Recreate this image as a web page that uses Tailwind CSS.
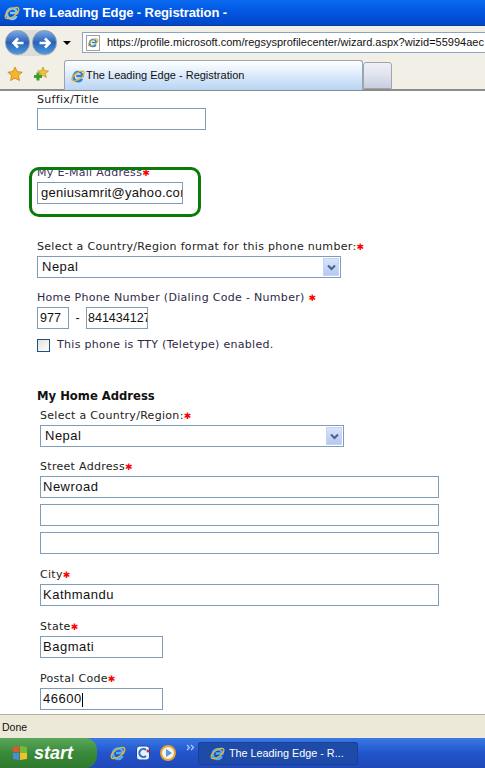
<!DOCTYPE html>
<html>
  <head>
    <meta charset="utf-8">
    <meta name="viewport" content="width=device-width">
    <title>The Leading Edge - Registration</title>
    <script src="https://cdn.jsdelivr.net/npm/@tailwindcss/browser@4"></script>
  </head>
  <body>
    <div class="flex flex-col w-[485px] h-[768px] overflow-hidden bg-white font-['DejaVu_Sans',sans-serif]">

      <!-- title bar -->
      <div class="flex items-center h-[26px] shrink-0 pl-[3px] gap-[2px] bg-gradient-to-b from-[#0a6af0] via-[#0255e0] to-[#0146c8] border-b border-[#0a3a9a]">
        <svg class="w-[18px] h-[18px]" viewBox="0 0 18 18">
          <path d="M4 10a5 5 0 0 1 10-1H7m-3 1a5 5 0 0 0 9.500 2" fill="none" stroke="#7ac8f4" stroke-width="2.600"/>
          <ellipse cx="9" cy="9" rx="8" ry="3.600" transform="rotate(-35 9 9)" fill="none" stroke="#f0b430" stroke-width="1.400"/>
        </svg>
        <span class="text-white font-bold text-[13px] font-['Liberation_Sans',sans-serif] tracking-[-0.1px]">The Leading Edge - Registration -</span>
      </div>

      <!-- address row -->
      <div class="flex items-center h-[33px] shrink-0 pl-[5px] bg-[#f2f0e6]">
        <div class="flex items-center rounded-full bg-[#dcdcd8] h-[26px]">
          <div class="flex items-center justify-center w-[25px] h-[25px] rounded-full bg-gradient-to-b from-[#7aa8e4] via-[#2a62b8] to-[#4a9ae0] border border-[#8a98b0]">
            <svg class="w-[16px] h-[16px]" viewBox="0 0 16 16"><path d="M13.500 8H3.500M8 3.500 3.500 8 8 12.500" fill="none" stroke="#fff" stroke-width="2.600"/></svg>
          </div>
          <div class="flex items-center justify-center ml-[2px] w-[25px] h-[25px] rounded-full bg-gradient-to-b from-[#7aa8e4] via-[#2a62b8] to-[#4a9ae0] border border-[#8a98b0]">
            <svg class="w-[16px] h-[16px]" viewBox="0 0 16 16"><path d="M2.500 8H12.500M8 3.500 12.500 8 8 12.500" fill="none" stroke="#fff" stroke-width="2.600"/></svg>
          </div>
        </div>
        <div class="ml-[6px] w-0 h-0 border-x-[4px] border-x-transparent border-t-[4px] border-t-black"></div>
        <div class="flex items-center ml-[11px] flex-1 h-[21px] bg-white border-y border-l border-[#8aa4c4] pl-[3px] overflow-hidden whitespace-nowrap">
          <div class="relative flex items-center justify-center w-[14px] h-[16px] bg-white border border-[#a0a0a0] shrink-0">
            <svg class="w-[13px] h-[13px]" viewBox="0 0 18 18"><path d="M4 10a5 5 0 0 1 10-1H7m-3 1a5 5 0 0 0 9.500 2" fill="none" stroke="#2a84d8" stroke-width="2.600"/><ellipse cx="9" cy="9" rx="8" ry="3.600" transform="rotate(-35 9 9)" fill="none" stroke="#e8a820" stroke-width="1.400"/></svg>
          </div>
          <span class="ml-[7px] text-[11px] text-[#111] font-['Liberation_Sans',sans-serif]">https://profile.microsoft.com/regsysprofilecenter/wizard.aspx?wizid=55994aec</span>
        </div>
      </div>

      <!-- tab row -->
      <div class="flex items-end h-[32px] shrink-0 bg-[#f2f0e6] border-b-2 border-[#8c8c88]">
        <div class="flex items-center self-center w-[64px] pl-[7px] gap-[10px] h-[24px]">
          <svg class="w-[16px] h-[16px]" viewBox="0 0 16 16"><path d="M8 1l2.200 4.600 5 .6-3.700 3.400 1 5L8 12.200 3.500 14.600l1-5L.8 6.200l5-.6z" fill="#f7b52c" stroke="#c07a10" stroke-width=".7"/></svg>
          <svg class="w-[16px] h-[16px]" viewBox="0 0 16 16"><path d="M10 1l1.500 3.500 4 .5-3 2.500.8 4L10 9.500 6.800 11.500l.8-4-3-2.500 4-.5z" fill="#f2c040" stroke="#b8860b" stroke-width=".6"/><path d="M5 6.500v8M1 10.500h8" stroke="#3aa02a" stroke-width="3"/></svg>
        </div>
        <div class="flex items-center w-[299px] h-[30px] pl-[5px] rounded-t-[3px] border-x border-t border-[#98a4b4] bg-gradient-to-b from-white to-[#b8d4f4] -mb-[1px]">
          <svg class="w-[16px] h-[16px]" viewBox="0 0 18 18"><path d="M4 10a5 5 0 0 1 10-1H7m-3 1a5 5 0 0 0 9.500 2" fill="none" stroke="#2a84d8" stroke-width="2.600"/><ellipse cx="9" cy="9" rx="8" ry="3.600" transform="rotate(-35 9 9)" fill="none" stroke="#e8a820" stroke-width="1.400"/></svg>
          <span class="text-[11px] text-[#111] whitespace-nowrap font-['Liberation_Sans',sans-serif]">The Leading Edge - Registration</span>
        </div>
        <div class="w-[29px] h-[27px] rounded-t-[3px] border border-[#a0a4ac] bg-gradient-to-b from-[#f0f0f6] via-[#dfe2ee] to-[#c8cde0]"></div>
      </div>

      <!-- page content -->
      <div class="relative flex-1 min-h-0 overflow-hidden bg-white pl-[37px] text-[11px] text-[#222] border-b border-[#b0b0a8]">
        <div class="flex flex-col pt-[2px]">
          <label class="h-[13px] leading-[13px] tracking-[0.3px]">Suffix/Title</label>
          <div class="mt-[2px] w-[169px] h-[22px] border border-[#7f9db9]"></div>

          <label class="mt-[36px] h-[13px] leading-[13px] tracking-[0.3px] text-[#403060]">My E-Mail Address<span class="text-[#f00] text-[9px]">✱</span></label>
          <div class="mt-[3px] w-[146px] h-[22px] border border-[#7f9db9] pl-[3px] text-[13px] leading-[20px] overflow-hidden whitespace-nowrap text-[#111] font-['Liberation_Sans',sans-serif] tracking-[0.3px]">geniusamrit@yahoo.com</div>

          <label class="mt-[36px] h-[13px] leading-[13px] tracking-[0.31px]">Select a Country/Region format for this phone number:<span class="text-[#f00] text-[9px]">✱</span></label>
          <div class="flex items-center justify-between mt-[3px] w-[304px] h-[22px] border border-[#7f9db9] pl-[4px] pr-[1px] text-[13px] font-['Liberation_Sans',sans-serif] tracking-[0.5px] text-[#111]">
            <span>Nepal</span>
            <span class="flex items-center justify-center w-[16px] h-[18px] bg-gradient-to-b from-[#d8e4fa] to-[#b4c8f4] border border-[#c4d4f0]"><svg class="w-[9px] h-[7px]" viewBox="0 0 9 7"><path d="M1 1.500 4.500 5 8 1.500" fill="none" stroke="#4d6185" stroke-width="2"/></svg></span>
          </div>

          <label class="mt-[13px] h-[13px] leading-[13px] tracking-[0.31px] text-[#302848]">Home Phone Number (Dialing Code - Number) <span class="text-[#f00] text-[9px]">✱</span></label>
          <div class="flex items-center mt-[3px] h-[22px] font-['Liberation_Sans',sans-serif] text-[12.500px] text-[#111]">
            <div class="w-[32px] h-[22px] border border-[#7f9db9] pl-[2px] leading-[20px]">977</div>
            <span class="w-[17px] text-center">-</span>
            <div class="w-[62px] h-[22px] border border-[#7f9db9] pl-[1px] leading-[20px] overflow-hidden whitespace-nowrap">841434127</div>
          </div>
          <div class="flex items-center mt-[10px] h-[13px]">
            <div class="w-[13px] h-[13px] border border-[#1c5180] bg-gradient-to-br from-[#e4e4dc] to-white"></div>
            <span class="ml-[7px] tracking-[0.3px] text-[#302848]">This phone is TTY (Teletype) enabled.</span>
          </div>

          <h2 class="mt-[37px] h-[14px] leading-[14px] text-[11.600px] font-bold text-[#111]">My Home Address</h2>

          <div class="flex flex-col ml-[3px]">
            <label class="mt-[6px] h-[13px] leading-[13px] tracking-[0.3px]">Select a Country/Region:<span class="text-[#f00] text-[9px]">✱</span></label>
            <div class="flex items-center justify-between mt-[3px] w-[304px] h-[22px] border border-[#7f9db9] pl-[4px] pr-[1px] text-[13px] font-['Liberation_Sans',sans-serif] tracking-[0.5px] text-[#111]">
              <span>Nepal</span>
              <span class="flex items-center justify-center w-[16px] h-[18px] bg-gradient-to-b from-[#d8e4fa] to-[#b4c8f4] border border-[#c4d4f0]"><svg class="w-[9px] h-[7px]" viewBox="0 0 9 7"><path d="M1 1.500 4.500 5 8 1.500" fill="none" stroke="#4d6185" stroke-width="2"/></svg></span>
            </div>

            <label class="mt-[13px] h-[13px] leading-[13px] tracking-[0.3px]">Street Address<span class="text-[#f00] text-[9px]">✱</span></label>
            <div class="mt-[3px] w-[399px] h-[22px] border border-[#7f9db9] pl-[2px] text-[13px] leading-[20px] font-['Liberation_Sans',sans-serif] tracking-[0.5px] text-[#111]">Newroad</div>
            <div class="mt-[6px] w-[399px] h-[22px] border border-[#7f9db9]"></div>
            <div class="mt-[6px] w-[399px] h-[22px] border border-[#7f9db9]"></div>

            <label class="mt-[14px] h-[13px] leading-[13px] tracking-[0.3px]">City<span class="text-[#f00] text-[9px]">✱</span></label>
            <div class="mt-[3px] w-[399px] h-[22px] border border-[#7f9db9] pl-[2px] text-[13px] leading-[20px] font-['Liberation_Sans',sans-serif] tracking-[0.5px] text-[#111]">Kathmandu</div>

            <label class="mt-[14px] h-[13px] leading-[13px] tracking-[0.3px]">State<span class="text-[#f00] text-[9px]">✱</span></label>
            <div class="mt-[3px] w-[123px] h-[22px] border border-[#7f9db9] pl-[2px] text-[13px] leading-[20px] font-['Liberation_Sans',sans-serif] tracking-[0.5px] text-[#111]">Bagmati</div>

            <label class="mt-[14px] h-[13px] leading-[13px] tracking-[0.3px]">Postal Code<span class="text-[#f00] text-[9px]">✱</span></label>
            <div class="mt-[3px] w-[123px] h-[22px] border border-[#7f9db9] pl-[2px] text-[13px] leading-[20px] font-['Liberation_Sans',sans-serif] tracking-[0.5px] text-[#111]">46600<span class="inline-block w-px h-[14px] bg-black align-middle"></span></div>
          </div>
        </div>
        <!-- green annotation drawn over the form -->
        <div class="absolute left-[29px] top-[76px] w-[172px] h-[50px] rounded-[10px] border-[3px] border-[#0a7a0a]"></div>
      </div>

      <!-- status bar -->
      <div class="flex items-center h-[23px] shrink-0 pl-[2px] pt-[3px] text-[10.500px] text-[#111] bg-[#ece9d8] font-['Liberation_Sans',sans-serif]">Done</div>

      <!-- taskbar -->
      <div class="flex items-center h-[30px] shrink-0 bg-gradient-to-b from-[#3a7ae4] via-[#2254cc] to-[#2048b8] font-['Liberation_Sans',sans-serif]">
        <div class="flex items-center w-[97px] h-full pl-[11px] rounded-r-[12px] bg-gradient-to-b from-[#5aa85a] via-[#3a8a3a] to-[#2f7a2f]">
          <svg class="w-[18px] h-[18px]" viewBox="0 0 18 18"><path d="M2 3l6-1v6H2z" fill="#e2552a"/><path d="M9 2l7 1v6H9z" fill="#7ab83a"/><path d="M2 9h6v7l-6-1z" fill="#4a8ae4"/><path d="M9 9h7v6l-7 1z" fill="#f2c02a"/></svg>
          <span class="ml-[5px] text-white text-[18px] font-bold italic leading-none">start</span>
        </div>
        <div class="flex items-center ml-[12px] gap-[8px]">
          <svg class="w-[18px] h-[18px]" viewBox="0 0 18 18"><path d="M4 10a5 5 0 0 1 10-1H7m-3 1a5 5 0 0 0 9.500 2" fill="none" stroke="#4ab0f0" stroke-width="2.600"/><ellipse cx="9" cy="9" rx="8" ry="3.600" transform="rotate(-35 9 9)" fill="none" stroke="#f0b430" stroke-width="1.400"/></svg>
          <svg class="w-[16px] h-[18px]" viewBox="0 0 16 18"><rect x="1.500" y="2" width="13" height="14" rx="3" fill="#e8f0fc" stroke="#1a4aa0"/><path d="M11 6a4 4 0 1 0 0 6" fill="none" stroke="#2a6ad0" stroke-width="2"/><circle cx="13" cy="7" r="1.500" fill="#d83020"/></svg>
          <svg class="w-[18px] h-[18px]" viewBox="0 0 18 18"><circle cx="9" cy="9" r="7" fill="#f4f4f0" stroke="#e8a030" stroke-width="2"/><path d="M7 5l6 4-6 4z" fill="#5a9ad8"/></svg>
        </div>
        <svg class="ml-[9px] mb-[12px] w-[9px] h-[7px]" viewBox="0 0 9 7"><path d="M1 1l2.500 2.500L1 6M5 1l2.500 2.500L5 6" fill="none" stroke="#b8d0f4" stroke-width="1.100"/></svg>
        <div class="flex items-center ml-[3px] w-[160px] h-[23px] pl-[10px] gap-[3px] rounded-[2px] bg-[#1e4aa8] border border-[#18409a] text-white text-[10.800px] whitespace-nowrap">
          <svg class="w-[17px] h-[17px] shrink-0" viewBox="0 0 18 18"><path d="M4 10a5 5 0 0 1 10-1H7m-3 1a5 5 0 0 0 9.500 2" fill="none" stroke="#4ab0f0" stroke-width="2.600"/><ellipse cx="9" cy="9" rx="8" ry="3.600" transform="rotate(-35 9 9)" fill="none" stroke="#f0b430" stroke-width="1.400"/></svg>
          <span>The Leading Edge - R...</span>
        </div>
      </div>
    </div>
  </body>
</html>
